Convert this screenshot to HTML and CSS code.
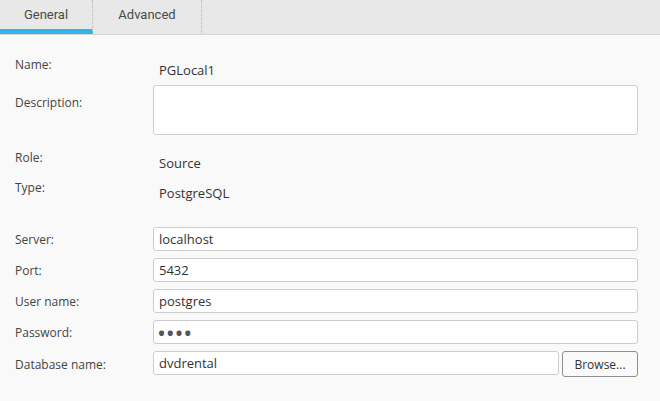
FILE: index.html
```html
<!DOCTYPE html>
<html>
<head>
<meta charset="utf-8">
<link rel="stylesheet" href="styles.css">
</head>
<body>
<div class="tabs">
  <div class="tab active">General</div>
  <div class="tab adv">Advanced</div>
  <div class="tab-rest"></div>
</div>
<div class="form">
  <div class="row r-name">
    <div class="label">Name:</div>
    <div class="value">PGLocal1</div>
  </div>
  <div class="row r-desc">
    <div class="label pad-desc">Description:</div>
    <textarea class="area"></textarea>
  </div>
  <div class="row r-static">
    <div class="label">Role:</div>
    <div class="value">Source</div>
  </div>
  <div class="row r-static r-type">
    <div class="label">Type:</div>
    <div class="value">PostgreSQL</div>
  </div>
  <div class="fields">
    <div class="row r-field">
      <div class="label">Server:</div>
      <input class="box" type="text" value="localhost">
    </div>
    <div class="row r-field">
      <div class="label">Port:</div>
      <input class="box" type="text" value="5432">
    </div>
    <div class="row r-field">
      <div class="label">User name:</div>
      <input class="box" type="text" value="postgres">
    </div>
    <div class="row r-field">
      <div class="label">Password:</div>
      <input class="box pw" type="password" value="abcd">
    </div>
    <div class="row r-field">
      <div class="label">Database name:</div>
      <div class="db">
        <input class="box" type="text" value="dvdrental">
        <button class="browse">Browse...</button>
      </div>
    </div>
  </div>
</div>
</body>
</html>
```
FILE: styles.css
```css
html, body {
  margin: 0;
  padding: 0;
  background: #f9f9f9;
  width: 660px;
  height: 401px;
  overflow: hidden;
}
body {
  font-family: "Open Sans", "Noto Sans", sans-serif;
  color: #444;
}
.tabs {
  display: flex;
  height: 34px;
  background: #e8e8e8;
  border-bottom: 1px solid #d6d6d6;
}
.tab {
  font-family: Roboto, "Liberation Sans", sans-serif;
  font-size: 13px;
  color: #4a4a4a;
  line-height: 29px;
  height: 34px;
  box-sizing: border-box;
  text-align: center;
  border-right: 1px dotted #b8b8b8;
}
.tab.active {
  width: 93px;
  border-bottom: 5px solid #30b4e4;
}
.tab.adv {
  width: 109px;
}
.tab-rest {
  flex: 1;
}
.form {
  padding: 22px 22px 0 15px;
}
.row {
  display: grid;
  grid-template-columns: 138px 1fr;
  align-items: start;
}
.label {
  font-size: 12px;
  line-height: 16px;
  color: #444;
}
.value {
  font-size: 13px;
  line-height: 16px;
  color: #333;
  padding-top: 5px;
  padding-left: 6px;
}
.r-name {
  height: 28px;
}
.r-desc {
  height: 50px;
  margin-bottom: 15px;
}
.pad-desc {
  padding-top: 10px;
}
.area {
  display: block;
  height: 50px;
  box-sizing: border-box;
  border: 1px solid #cfcfcf;
  border-radius: 3px;
  background: #fff;
  resize: none;
  margin: 0;
}
.r-static {
  height: 30px;
}
.r-type {
  height: 31px;
}
.fields {
  padding-top: 16px;
  display: flex;
  flex-direction: column;
  gap: 7px;
}
.r-field {
  align-items: center;
  height: 24px;
}
.r-field .label {
  padding-top: 1px;
}
.box {
  display: block;
  width: 100%;
  height: 24px;
  box-sizing: border-box;
  border: 1px solid #cdcdcd;
  border-radius: 3px;
  background: #fff;
  margin: 0;
  padding: 0 5px;
  font-family: "Open Sans", "Noto Sans", sans-serif;
  font-size: 13px;
  color: #333;
  outline: none;
}
.pw {
  color: #555;
  font-size: 24px;
  letter-spacing: -0.3px;
  padding-left: 3px;
}
.db {
  display: flex;
  gap: 3px;
  align-items: start;
}
.db .box {
  flex: 1;
  width: auto;
}
.browse {
  width: 76px;
  height: 26px;
  box-sizing: border-box;
  border: 1px solid #8e8e8e;
  border-radius: 3px;
  background: #fafafa;
  font-family: "Open Sans", "Noto Sans", sans-serif;
  font-size: 12px;
  color: #333;
  padding: 0;
  margin: 0;
}
```
